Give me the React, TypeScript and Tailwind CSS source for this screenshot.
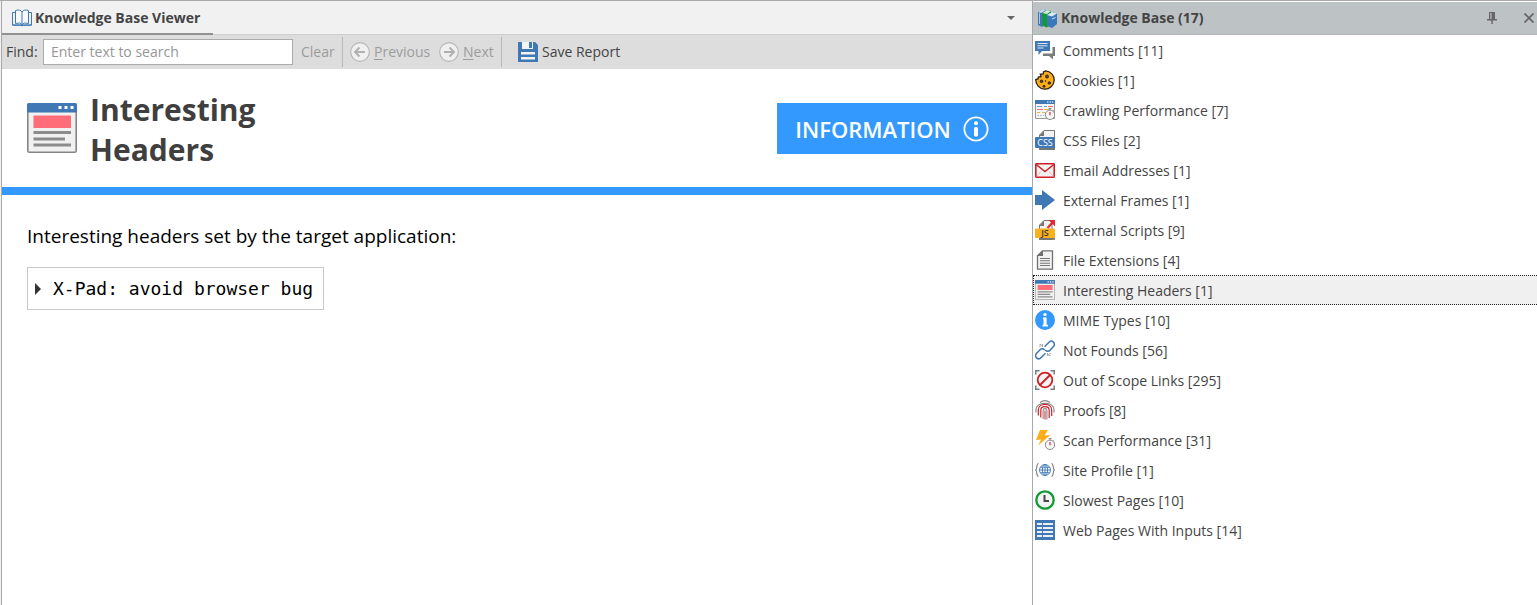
import React, { useState, type ReactNode } from "react";

const BLUE = "#3f78b5";
const GREY = "#7b7b7b";
const RED = "#cf2026";

function Icon({ children }: { children: ReactNode }) {
  return (
    <svg viewBox="0 0 20 20" className="size-5 shrink-0" aria-hidden="true">
      {children}
    </svg>
  );
}

function BookIcon() {
  return (
    <svg viewBox="0 0 20 18" className="h-[18px] w-5 shrink-0" fill="none" stroke={BLUE} aria-hidden="true">
      <path d="M3.500 1.500Q8 0 10 3q2-3 6.500-1.500v13Q12 13 10 15.500 8 13 3.500 14.500z" fill="#f8fafc" />
      <path d="M10 3v13M3.500 3.500h-3v12.500h7q2.500 1.500 5 0h7V3.500h-3" />
      <path d="M.5 16.200h19" strokeWidth="1.200" />
    </svg>
  );
}

function BooksIcon() {
  return (
    <Icon>
      <path d="M1 4l5-3 3 1v14l-4 3-4-2z" fill={BLUE} />
      <path d="M1 4l5-3 3 1-5 3z" fill="#c8d9e8" />
      <path d="M5.500 5l4.500-3 4 1v14l-4.500 2.500-4-2z" fill="#139a33" />
      <path d="M5.500 5L10 2l4 1-4 3z" fill="#d6eadb" />
      <path d="M10 7l5-3 5 1.500V16l-5 4-5-2z" fill="#3979bb" />
      <path d="M10 7l5-3 5 1.500-5 3z" fill="#dce8f2" />
      <path d="M2.500 5v11" stroke="#a9c8df" />
      <path d="M15 11l3.500-1.500" stroke="#d7e5f1" />
    </Icon>
  );
}

function ArrowCircle({ right = false }: { right?: boolean }) {
  return (
    <svg viewBox="0 0 20 20" className="size-5 shrink-0" fill="none" aria-hidden="true">
      <circle cx="10" cy="10" r="9.300" fill="#f0f0f0" stroke="#b9b9b9" strokeWidth="1.200" />
      <path
        d={right ? "M5 10h9M10.500 5.500L15 10l-4.500 4.500" : "M15 10H6M9.500 5.500L5 10l4.500 4.500"}
        stroke="#b1b1b1"
        strokeWidth="2"
      />
    </svg>
  );
}

function SaveIcon() {
  return (
    <Icon>
      <path d="M0 0h17l3 3v17H0z" fill={BLUE} />
      <path d="M4 0h11v7H4z" fill="#f3f3f3" />
      <path d="M11 0h3v6h-3z" fill={BLUE} />
      <path d="M3 10h14v2.500H3zM3 15h14v2.500H3z" fill="#f3f3f3" />
    </Icon>
  );
}

function WindowIcon({ large = false }: { large?: boolean }) {
  return (
    <svg viewBox="0 0 50 50" className={large ? "size-[50px] shrink-0" : "size-5 shrink-0"} aria-hidden="true">
      <rect x=".8" y=".8" width="48.400" height="48.400" rx="1.500" fill="#f1f1f1" stroke="#858585" strokeWidth="1.600" />
      <path d="M0 9.500V2a2 2 0 0 1 2-2h46a2 2 0 0 1 2 2v7.500z" fill={BLUE} />
      <path d="M31.500 3h3v3h-3zM37.500 3h3v3h-3zM43.500 3h3v3h-3z" fill="#fff" />
      <path d="M6.500 12.500H44V25H6.500z" fill="#ff6d78" />
      <path d="M6.500 28H44v3H6.500zM6.500 34.500H38v3H6.500zM6.500 40.500H44v3H6.500z" fill="#8b8b8b" />
    </svg>
  );
}

function Stopwatch() {
  return (
    <g fill="none" stroke="#8a8a8a">
      <circle cx="15" cy="14.800" r="4.700" fill="#f7f7f7" />
      <path d="M13.500 8.500h3M15 9v1.300M18.300 10.300l1 1" />
      <path d="M15 12v3.200" stroke="#e2454b" strokeWidth="1.400" />
    </g>
  );
}

const icons: Record<string, ReactNode> = {
  comments: (
    <Icon>
      <path d="M17.500 7H20v9h-2v3.500L14 16H8v-2.500h9.500z" fill={GREY} />
      <path d="M0 1h15v10H7l-3.500 4v-4H0z" fill={BLUE} />
      <path d="M2.500 3.500h10M2.500 5.700h10M2.500 8h6" stroke="#d9e6f1" strokeWidth="1.100" />
    </Icon>
  ),
  cookies: (
    <Icon>
      <path
        d="M10.500.8a9.200 9.200 0 1 1-9.700 8.700L3 9l.3-2L6 6.600 5.300 4l3-.2.200-2z"
        fill="#fbae1c"
        stroke="#292018"
        strokeWidth="1.300"
      />
      <g fill="#6b4b1e" stroke="#292018">
        <circle cx="12" cy="6.500" r="1.500" />
        <circle cx="6.500" cy="11.300" r="1.300" />
        <circle cx="14.300" cy="13" r="1.200" />
        <circle cx="9" cy="16.300" r="1" />
        <circle cx="10.500" cy="11" r=".4" />
      </g>
    </Icon>
  ),
  crawl: (
    <Icon>
      <path d="M.5.500h19v18H.5z" fill="#f6f6f6" stroke="#999" />
      <path d="M0 0h20v4H0z" fill={BLUE} />
      <path d="M12 1.500h1.500v1H12zM14.500 1.500H16v1h-1.500zM17 1.500h1.500v1H17z" fill="#fff" />
      <path d="M2 6.500h5M9 6.500h3" stroke="#6d9ff0" strokeWidth="1.200" />
      <path d="M13 6.500h5M2 9.500h6" stroke="#f46b72" strokeWidth="1.200" />
      <path d="M9 9.500h5M2 12.500h3M7 12.500h3" stroke="#f5b13d" strokeWidth="1.200" />
      <path d="M2 15.500h7" stroke="#bbb" strokeDasharray="2 1" />
      <Stopwatch />
    </Icon>
  ),
  css: (
    <Icon>
      <path d="M9 .500h10.500v19h-15V5z" fill="#f2f2f2" stroke="#777" />
      <path d="M4 6l5-5.500V6z" fill="#777" />
      <path d="M4 17.500h16v2H4z" fill="#777" />
      <rect y="7" width="20" height="11" rx="1" fill={BLUE} />
      <text x="10" y="15.800" textAnchor="middle" fontFamily="Open Sans" fontSize="9" fill="#fff">
        CSS
      </text>
    </Icon>
  ),
  email: (
    <Icon>
      <rect x=".8" y="3.800" width="18.400" height="13.400" rx=".6" fill="#f2f2f2" stroke={RED} strokeWidth="1.600" />
      <path d="M1.200 4.500l8.800 7 8.800-7" fill="none" stroke={RED} strokeWidth="1.500" />
      <path d="M1.500 16.500l4.500-5M18.500 16.500l-4.500-5" stroke="#e9a4a7" strokeWidth=".7" />
    </Icon>
  ),
  frames: (
    <Icon>
      <path d="M0 5h7V0l13 10L7 20v-5H0z" fill={BLUE} />
    </Icon>
  ),
  scripts: (
    <Icon>
      <path d="M9 .500h8v19H4.500V5z" fill="#f2f2f2" stroke="#777" />
      <path d="M4 6l5-5.500V6z" fill="#777" />
      <path d="M4 18h16v1.800H4z" fill="#777" />
      <path d="M12.500 8l5-5.500" stroke="#e12830" strokeWidth="2.200" />
      <path d="M13.500 0H20v6.500z" fill="#e12830" />
      <rect y="8.500" width="20" height="9.500" rx="1" fill="#fbb01d" />
      <text x="10" y="16.400" textAnchor="middle" fontFamily="Open Sans" fontSize="9" fontWeight="600" fill="#373737">
        JS
      </text>
    </Icon>
  ),
  extensions: (
    <Icon>
      <path d="M7.500.800h10v18.400h-15V5.800z" fill="#f2f2f2" stroke="#707070" strokeWidth="1.300" />
      <path d="M2.500 6L8 .500V6z" fill="#707070" />
      <path d="M5 8.500h10M5 10.800h10M5 13.200h10M5 15.500h10" stroke="#777" strokeWidth="1.100" />
    </Icon>
  ),
  headers: <WindowIcon />,
  mime: (
    <Icon>
      <circle cx="10" cy="10" r="10" fill="#3399ff" />
      <circle cx="10" cy="4.600" r="1.700" fill="#fff" />
      <path d="M8 7.500h3.600v7.300H13V16.500H7.500v-1.700h1V9.200H8z" fill="#fff" />
    </Icon>
  ),
  missing: (
    <Icon>
      <g fill="none" stroke={BLUE} strokeWidth="1.500" strokeLinecap="round">
        <path d="M10 6.200l4-4a3.100 3.100 0 0 1 4.500 4.300L15 10.200a3 3 0 0 1-4.300.2" />
        <path d="M10 13.800l-4 4a3.100 3.100 0 0 1-4.500-4.300L5 9.800a3 3 0 0 1 4.300-.2" />
      </g>
      <path d="M4 6.500l3-1M4.500 4.500h2M7.500 7V4M12.500 13v3M13 14.500l3-1M13.500 15.500h2" stroke="#a3a3a3" strokeWidth=".9" />
    </Icon>
  ),
  scope: (
    <Icon>
      <path d="M.8 4.500V.8h3.700M15.500.8h3.700v3.700M19.200 15.500v3.700h-3.700M4.500 19.200H.8v-3.700" fill="none" stroke={GREY} strokeWidth="1.500" />
      <circle cx="10" cy="10" r="7.300" fill="#f4f4f4" stroke={RED} strokeWidth="1.800" />
      <path d="M5 15L15 5" stroke={RED} strokeWidth="1.800" />
    </Icon>
  ),
  proofs: (
    <Icon>
      <g fill="none" stroke="#888" strokeWidth="1.100">
        <path d="M5 2.500c3-2.200 7-2.200 10 0M1 9c1-7.500 17-7.500 18 0v3.500M1 9v3.500" />
      </g>
      <g fill="none" stroke={RED} strokeWidth="1.200">
        <path d="M3.300 15.500V10c0-7.500 13.400-7.500 13.400 0v6" />
        <path d="M5.800 17.500V10.300c0-4.800 8.400-4.800 8.400 0V18" />
      </g>
      <path d="M8.100 19v-8.500c0-2.500 3.800-2.500 3.800 0V19.500" fill="none" stroke="#888" strokeWidth="1.100" />
      <path d="M10 10.500v9" stroke={RED} />
    </Icon>
  ),
  scan: (
    <Icon>
      <path d="M5 0h8L9.500 5.500l6-.5L3 15.500l3.200-6L1 10z" fill="#fcae1b" />
      <Stopwatch />
    </Icon>
  ),
  profile: (
    <Icon>
      <path d="M3.500 3.500C1 3.500 2.500 9 .7 10c1.800 1 .3 6.500 2.800 6.500M16.500 3.500c2.500 0 1 5.500 2.800 6.500-1.800 1-.3 6.500-2.800 6.500" fill="none" stroke={GREY} strokeWidth="1.100" />
      <g fill="none" stroke={BLUE} strokeWidth=".9">
        <circle cx="10" cy="10" r="5.500" />
        <ellipse cx="10" cy="10" rx="2.600" ry="5.500" />
        <path d="M10 4.500v11M4.500 10h11M5.300 7.300h9.400M5.300 12.700h9.400" />
      </g>
    </Icon>
  ),
  slow: (
    <Icon>
      <circle cx="10" cy="10" r="8.700" fill="#f3f3f3" stroke="#119a35" strokeWidth="2.300" />
      <path d="M9.500 5v6H14" fill="none" stroke="#484848" strokeWidth="2" />
    </Icon>
  ),
  inputs: (
    <Icon>
      <path d="M0 0h20v20H0z" fill={BLUE} />
      <path d="M2 3h5v2H2zM2 7h5v2H2zM2 11h5v2H2zM2 15h5v2H2zM8 3h10v2H8zM8 7h10v2H8zM8 11h10v2H8zM8 15h10v2H8z" fill="#eaf0f6" />
    </Icon>
  ),
};

const entries = [
  { icon: "comments", label: "Comments", count: 11 },
  { icon: "cookies", label: "Cookies", count: 1 },
  { icon: "crawl", label: "Crawling Performance", count: 7 },
  { icon: "css", label: "CSS Files", count: 2 },
  { icon: "email", label: "Email Addresses", count: 1 },
  { icon: "frames", label: "External Frames", count: 1 },
  { icon: "scripts", label: "External Scripts", count: 9 },
  { icon: "extensions", label: "File Extensions", count: 4 },
  { icon: "headers", label: "Interesting Headers", count: 1 },
  { icon: "mime", label: "MIME Types", count: 10 },
  { icon: "missing", label: "Not Founds", count: 56 },
  { icon: "scope", label: "Out of Scope Links", count: 295 },
  { icon: "proofs", label: "Proofs", count: 8 },
  { icon: "scan", label: "Scan Performance", count: 31 },
  { icon: "profile", label: "Site Profile", count: 1 },
  { icon: "slow", label: "Slowest Pages", count: 10 },
  { icon: "inputs", label: "Web Pages With Inputs", count: 14 },
];

function Toolbar() {
  return (
    <div className="flex h-[34px] items-center bg-[#dddddd] pl-1 text-[#444444]">
      <label htmlFor="find" className="w-[37px]">Find:</label>
      <input
        id="find"
        type="text"
        placeholder="Enter text to search"
        className="h-[26px] w-[250px] border border-[#ababab] bg-white px-[7px] pb-[2px] outline-none placeholder:text-[#969696]"
      />
      <button type="button" className="ml-2 w-[41px] text-left text-[#9c9c9c]">Clear</button>
      <span className="h-[30px] w-px bg-[#b9b9b9]" />
      <button type="button" className="ml-[7px] flex w-[89px] items-center gap-1 text-[#9c9c9c]">
        <ArrowCircle />
        <span><u className="underline-offset-2">P</u>revious</span>
      </button>
      <button type="button" className="flex w-[62px] items-center gap-1 text-[#9c9c9c]">
        <ArrowCircle right />
        <span><u className="underline-offset-2">N</u>ext</span>
      </button>
      <span className="h-[30px] w-px bg-[#b9b9b9]" />
      <button type="button" className="ml-4 flex items-center gap-1">
        <SaveIcon />
        <span>Save Report</span>
      </button>
    </div>
  );
}

function Viewer() {
  const [open, setOpen] = useState(false);
  return (
    <main className="flex min-w-0 flex-1 flex-col border-l border-[#a9a9a9] bg-white">
      <div className="flex h-[34px] items-start justify-between border-b border-[#d0d0d0] bg-[#f1f1f1]">
        <div className="flex h-[34px] w-[211px] items-center gap-[3px] border-b-2 border-[#919191] pt-[2px] pl-[10px] font-bold text-[#444444]">
          <BookIcon />
          <span className="whitespace-nowrap">Knowledge Base Viewer</span>
        </div>
        <button type="button" aria-label="Window list" className="flex h-[34px] items-center px-[17px]">
          <svg viewBox="0 0 8 4" className="h-1 w-2" aria-hidden="true">
            <path d="M0 0h8L4 4z" fill="#666" />
          </svg>
        </button>
      </div>
      <Toolbar />
      <header className="flex items-start justify-between border-b-8 border-[#3399ff] pt-[21px] pr-[25px] pb-[17px] pl-[25px]">
        <div className="flex items-start gap-[13px]">
          <div className="pt-[13px]"><WindowIcon large /></div>
          <h1 className="w-[200px] text-[30px] leading-10 font-bold text-[#3f3f3f]">Interesting Headers</h1>
        </div>
        <div className="mt-[13px] flex h-[51px] w-[230px] items-center justify-center gap-3 bg-[#3399ff] text-[22px] font-semibold text-white">
          <span>INFORMATION</span>
          <svg viewBox="0 0 26 26" className="size-[26px]" aria-hidden="true">
            <circle cx="13" cy="13" r="11.600" fill="none" stroke="#fff" strokeWidth="1.800" />
            <circle cx="13" cy="7.300" r="2" fill="#fff" />
            <rect x="11" y="11" width="4" height="9.500" rx="1.600" fill="#fff" />
          </svg>
        </div>
      </header>
      <section className="px-[25px] pt-[25px] text-black">
        <p className="text-[19px] leading-8">Interesting headers set by the target application:</p>
        <button
          type="button"
          aria-expanded={open}
          onClick={() => setOpen(!open)}
          className="mt-[15px] flex h-[43px] items-center gap-3 border border-[#c9c9c9] pr-[10px] pl-[7px] font-['DejaVu_Sans_Mono','Liberation_Mono',monospace] text-[18px]"
        >
          <svg viewBox="0 0 6 12" className="h-3 w-[6px]" aria-hidden="true">
            <path d="M0 0l6 6-6 6z" fill="#333" />
          </svg>
          <span>X-Pad: avoid browser bug</span>
        </button>
      </section>
    </main>
  );
}

function KnowledgeBase() {
  const [selected, setSelected] = useState("headers");
  return (
    <aside className="w-[505px] shrink-0 border-l border-[#a9a9a9] bg-white text-[#444444]">
      <div className="flex h-[34px] items-center border-t border-b border-t-white border-b-[#b0b3b5] bg-[#bdc2c5] pr-[3px] pl-1">
        <BooksIcon />
        <h2 className="ml-1 flex-1 font-bold text-[#444444]">Knowledge Base (17)</h2>
        <button type="button" aria-label="Auto hide" className="mr-[27px]">
          <svg viewBox="0 0 10 12" className="h-3 w-[10px]" aria-hidden="true">
            <path d="M2 0h6v7h2v1.500H5.700V12H4.300V8.500H0V7h2z" fill="#666" />
            <path d="M3.300 1h1.200v6H3.300z" fill="#bdc2c5" />
          </svg>
        </button>
        <button type="button" aria-label="Close">
          <svg viewBox="0 0 10 10" className="size-[10px]" aria-hidden="true">
            <path d="M.5.500l9 9M9.500.500l-9 9" stroke="#666" strokeWidth="1.700" />
          </svg>
        </button>
      </div>
      <ul>
        {entries.map((entry) => (
          <li key={entry.icon}>
            <button
              type="button"
              onClick={() => setSelected(entry.icon)}
              className={
                entry.icon === selected
                  ? "flex h-[30px] w-full items-center gap-2 border-y border-l border-dotted border-[#222222] bg-[#f0f0f0] pl-px text-left"
                  : "flex h-[30px] w-full items-center gap-2 pl-[2px] text-left"
              }
            >
              {icons[entry.icon]}
              <span className="pt-[2px]">{entry.label} [{entry.count}]</span>
            </button>
          </li>
        ))}
      </ul>
    </aside>
  );
}

export default function App() {
  return (
    <div className="flex min-h-screen border-t border-[#a9a9a9] bg-[#f1f1f1] pl-px font-['Open_Sans','Noto_Sans',sans-serif] text-[14px] leading-5">
      <Viewer />
      <KnowledgeBase />
    </div>
  );
}
